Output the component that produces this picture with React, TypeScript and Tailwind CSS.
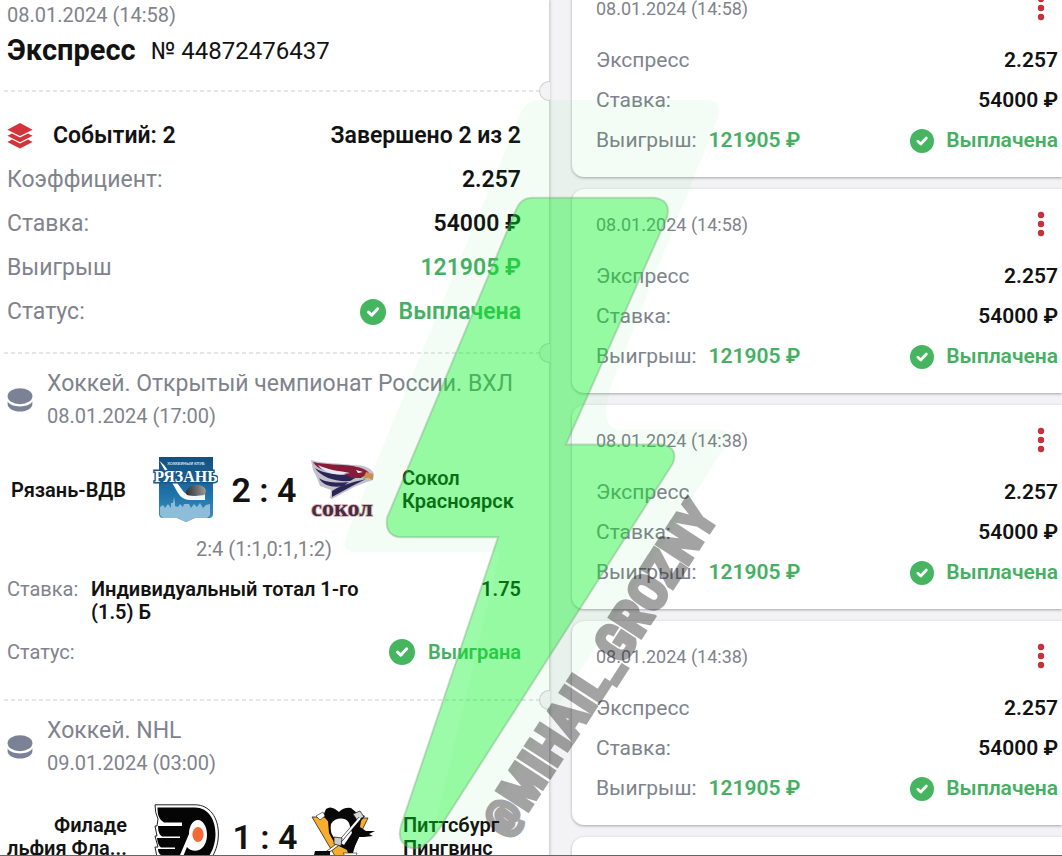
import type { ReactNode } from 'react';

interface Bet {
  id: number;
  date: string;
}

interface GameEvent {
  league: string;
  date: string;
  home: string;
  away: string;
  homeLogo: ReactNode;
  awayLogo: ReactNode;
  score: string;
  periods: string;
  pick: string;
  odds: string;
}

const BETS: Bet[] = [
  { id: 1, date: '08.01.2024 (14:58)' },
  { id: 2, date: '08.01.2024 (14:58)' },
  { id: 3, date: '08.01.2024 (14:38)' },
  { id: 4, date: '08.01.2024 (14:38)' },
];

function CheckBadge({ className }: { className: string }) {
  return (
    <svg viewBox="0 0 26 26" className={className} aria-hidden="true">
      <circle cx="13" cy="13" r="13" fill="#45b55f" />
      <path
        d="M8.500 13.200l3.200 3 6-6.400"
        fill="none"
        stroke="#fff"
        strokeWidth="3"
        strokeLinecap="round"
        strokeLinejoin="round"
      />
    </svg>
  );
}

function LayersIcon() {
  return (
    <svg viewBox="0 0 26 26" className="h-[26px] w-[26px] shrink-0" fill="#d3333a" aria-hidden="true">
      <path d="M13 0L25.6 6.8L13 13L0.4 6.8Z" />
      <path d="M0.4 12.8L5 10.400L13 14.400L21 10.400L25.6 12.8L13 19.2Z" />
      <path d="M0.4 19L5 16.600L13 20.600L21 16.600L25.6 19L13 25.6Z" />
    </svg>
  );
}

function PuckIcon() {
  return (
    <svg viewBox="0 0 26 26" className="h-[26px] w-[26px] shrink-0" fill="#7c8296" aria-hidden="true">
      <ellipse cx="13" cy="9.200" rx="12.4" ry="8" />
      <path d="M0.6 14.600C3 18 7.4 19.400 13 19.400s10-1.400 12.400-4.800v2.600c0 4-5.600 7.400-12.400 7.400S.6 21.200.6 17.200z" />
    </svg>
  );
}

function RyazanLogo() {
  return (
    <svg viewBox="0 0 66 66" className="h-[66px] w-[66px] shrink-0" aria-hidden="true">
      <defs>
        <linearGradient id="ryazan" x1="0" y1="0" x2="0" y2="1">
          <stop offset="0" stopColor="#13507f" />
          <stop offset="0.5" stopColor="#1b6ea6" />
          <stop offset="1" stopColor="#3f92c0" />
        </linearGradient>
        <linearGradient id="ryazanPuck" x1="0" y1="0" x2="1" y2="0">
          <stop offset="0" stopColor="#2d2f33" />
          <stop offset="1" stopColor="#9b9b9b" />
        </linearGradient>
      </defs>
      <path d="M7 0H61V57Q61 61 57 61H43L34 65L25 61H11Q7 61 7 57Z" fill="url(#ryazan)" />
      <path
        d="M8 58V50l3-2 2 3 3-4 3 4V46h2l1-6 1 6v3l3 1 2-3 3 3 1-3h5l2 4 3-4 3 3 3-4 3 5 3-3 4-1v11l-3 3H43l-9 4-9-4H11z"
        fill="#8dbdd8"
      />
      <path d="M7.500 4L26 36q4 7 12 7h15v-6l-14 1q-5 0-8-4L12 8z" fill="#fff" />
      <ellipse cx="44" cy="35" rx="10" ry="7" fill="url(#ryazanPuck)" transform="rotate(-8 44 35)" />
      <path d="M31 39l7 3q8 1 15 0v-4l-10 1q-8 0-12-3z" fill="#f2f6fa" />
      <text x="34" y="8" textAnchor="middle" fontSize="4" fontWeight="700" fill="#cfe2ef" fontFamily="Liberation Sans, sans-serif">
        ХОККЕЙНЫЙ КЛУБ
      </text>
      <text
        x="34"
        y="25"
        textAnchor="middle"
        fontSize="16"
        fontWeight="700"
        fill="#fff"
        stroke="#17588a"
        strokeWidth="3"
        paintOrder="stroke"
        fontFamily="Liberation Serif, serif"
      >
        РЯЗАНЬ
      </text>
    </svg>
  );
}

function SokolLogo() {
  return (
    <svg viewBox="0 0 66 66" className="h-[66px] w-[66px] shrink-0" aria-hidden="true">
      <path
        d="M1 3C14 7 30 6 43 8C54 8 62 11 64 17L63 23L57 25L44 30L22 42L20 41L21 33L10 29L7 21L3 13Z"
        fill="#c3c0cc"
      />
      <path d="M3 5C16 8 30 7 43 9L52 13L45 17L30 16C18 16 7 12 3 5Z" fill="#861c38" />
      <path d="M5 11C14 17 28 18 40 18L47 20L40 24C26 25 12 21 5 11Z" fill="#2b2658" />
      <path d="M9 21C16 26 28 26 39 25L33 29C24 31 13 29 9 21Z" fill="#2b2658" />
      <path d="M28 9C42 8 54 10 59 16L51 21L42 21L32 16Z" fill="#861c38" />
      <path d="M22 34C30 28 44 25 56 22L44 28L22 40Z" fill="#2b2658" />
      <path d="M56 15L63 17V23L58 21L53 22Z" fill="#d48a4a" />
      <path d="M46 13l7 2-5 1z" fill="#fff" />
      <path d="M8 8C18 13 30 14 40 16L30 17.500C20 17 12 14 8 8Z" fill="#eae7ee" />
      <text
        x="32"
        y="59"
        textAnchor="middle"
        fontSize="24"
        fontWeight="700"
        fill="#4a2a3c"
        stroke="#d9b9c2"
        strokeWidth="2"
        paintOrder="stroke"
        fontFamily="Liberation Serif, serif"
      >
        сокол
      </text>
    </svg>
  );
}

function FlyersLogo() {
  return (
    <svg viewBox="0 0 66 66" className="h-[66px] w-[66px] shrink-0" aria-hidden="true">
      <path
        d="M2 .8H42C57 .8 65.400 14 65.400 30S57 62 44 62H2L5 53H4L2 43H5L2 32H4L2 22H4L5 15Q2 9 2 .8Z"
        fill="#fff"
        stroke="#222"
        strokeWidth="1"
      />
      <path
        d="M4.500 3.500H42C55 3.500 62.500 15 62.500 30S54 60 43 60H27L34 43C36 46 42 48 46 46C51 44 54 38 54 30.500S50 16 45 16S36 22 36 30L27 51H8Q5 49 5 45H22V43.500H8Q5 42 4 34H27V32.500H9Q5 30 5 22H29V18.500H11Q4 15 4.500 3.500Z"
        fill="#050505"
      />
      <ellipse cx="45" cy="30.500" rx="5.600" ry="7.600" fill="#f26a38" />
    </svg>
  );
}

function PenguinsLogo() {
  return (
    <svg viewBox="0 0 66 66" className="h-[66px] w-[66px] shrink-0" aria-hidden="true">
      <path d="M1 13H15L30 40L46 14H57L36 57H27Z" fill="#f8ae2c" stroke="#222" strokeWidth="0.800" />
      <path
        d="M12 12L15 5Q19 2 24 5L28 8Q33 3 40 4L46 9L54 12L50 17L49 23L55 27L64 27L58 30L62 32L53 33L48 33L44 42L42 49L44 54L38 53L36 46L24 40L18 29L17 17Z"
        fill="#080808"
      />
      <path d="M20 20C24 13 35 13 38 19L41 29L33 41L25 36Q18 29 20 20Z" fill="#fff" />
      <path d="M5 12L12 8L14 12L9 16Z" fill="#fff" stroke="#222" strokeWidth="0.600" />
      <path d="M42 10L49 7L53 13L46 16Z" fill="#d8d8d8" stroke="#222" strokeWidth="0.800" />
      <path d="M49 14L26 41L14 50" fill="none" stroke="#222" strokeWidth="3.200" />
      <path d="M49 14L26 41L14 50" fill="none" stroke="#fff" strokeWidth="2" />
      <path d="M23 33L31 34L30 42L23 40Z" fill="#ccc" stroke="#222" strokeWidth="0.800" />
      <path d="M4 47H19V51H3Z" fill="#080808" />
      <path d="M32 49H46L45 52H34Z" fill="#fff" stroke="#222" strokeWidth="0.600" />
    </svg>
  );
}

const EVENTS: GameEvent[] = [
  {
    league: 'Хоккей. Открытый чемпионат России. ВХЛ',
    date: '08.01.2024 (17:00)',
    home: 'Рязань-ВДВ',
    away: 'Сокол\nКрасноярск',
    homeLogo: <RyazanLogo />,
    awayLogo: <SokolLogo />,
    score: '2 : 4',
    periods: '2:4 (1:1,0:1,1:2)',
    pick: 'Индивидуальный тотал 1-го\n(1.5) Б',
    odds: '1.75',
  },
  {
    league: 'Хоккей. NHL',
    date: '09.01.2024 (03:00)',
    home: 'Филаде\nльфия Фла...',
    away: 'Питтсбург\nПингвинс',
    homeLogo: <FlyersLogo />,
    awayLogo: <PenguinsLogo />,
    score: '1 : 4',
    periods: '',
    pick: '',
    odds: '',
  },
];

// dashed tear line with the half-round cut on the ticket's right edge
function TearLine() {
  return (
    <div className="relative h-[2px]">
      <div className="mr-2 ml-1 h-[2px] bg-[repeating-linear-gradient(90deg,#e6e6e7_0_4px,transparent_4px_7px)]" />
      <span className="absolute -top-[9px] -right-px h-5 w-[11px] rounded-l-full border border-r-0 border-[#cfcfd2] bg-[#f3f3f5]" />
    </div>
  );
}

function SummaryRow({ label, children }: { label: string; children: ReactNode }) {
  return (
    <div className="flex h-11 items-center justify-between text-[23px]">
      <span className="text-[#80838c]">{label}</span>
      {children}
    </div>
  );
}

function EventBlock({ event }: { event: GameEvent }) {
  return (
    <section className="pt-[14px] pr-7 pb-[31px] pl-[7px]">
      <div className="flex items-center">
        <PuckIcon />
        <div className="pl-[14px] whitespace-nowrap text-[#80838c]">
          <h2 className="text-[23px] leading-8">{event.league}</h2>
          <p className="text-[20px] leading-8">{event.date}</p>
        </div>
      </div>

      <div className="mt-[25px] flex h-[66px] items-center text-[20px] leading-[23px] font-semibold">
        <span className="flex-1 pr-[26px] text-right whitespace-pre">{event.home}</span>
        {event.homeLogo}
        <span className="w-[92px] text-center text-[34px] leading-10">{event.score}</span>
        {event.awayLogo}
        <span className="flex-1 pl-[26px] whitespace-pre">{event.away}</span>
      </div>

      {event.periods ? (
        <>
          <p className="mt-[14px] text-center text-[20px] leading-6 text-[#80838c]">{event.periods}</p>
          <div className="mt-[17px] flex text-[20px] leading-[23px]">
            <span className="w-[84px] text-[#80838c]">Ставка:</span>
            <span className="flex-1 font-semibold whitespace-pre">{event.pick}</span>
            <span className="font-semibold">{event.odds}</span>
          </div>
          <div className="mt-3 flex h-8 items-center text-[20px]">
            <span className="flex-1 text-[#80838c]">Статус:</span>
            <CheckBadge className="mr-[13px] h-[26px] w-[26px]" />
            <span className="font-semibold text-[#45b063]">Выиграна</span>
          </div>
        </>
      ) : null}
    </section>
  );
}

function BetCard({ bet }: { bet: Bet }) {
  return (
    <article className="rounded-l-xl bg-white pt-5 pr-1 pb-4 pl-6 text-[21px] shadow-[0_1px_3px_rgba(0,0,0,0.32)]">
      <div className="flex h-[30px] items-center justify-between">
        <span className="text-[18px] text-[#80838c]">{bet.date}</span>
        <button type="button" aria-label="Меню" className="mr-[13px]">
          <svg viewBox="0 0 8 26" className="h-[26px] w-2" fill="#c4323b">
            <circle cx="4" cy="4" r="3.200" />
            <circle cx="4" cy="13" r="3.200" />
            <circle cx="4" cy="22" r="3.200" />
          </svg>
        </button>
      </div>
      <div className="mt-[18px] flex h-10 items-center justify-between">
        <span className="text-[#80838c]">Экспресс</span>
        <span className="font-semibold">2.257</span>
      </div>
      <div className="flex h-10 items-center justify-between">
        <span className="text-[#80838c]">Ставка:</span>
        <span className="font-semibold">54000 ₽</span>
      </div>
      <div className="flex h-10 items-center">
        <span className="text-[#80838c]">Выигрыш:</span>
        <span className="pl-3 font-semibold text-[#45b063]">121905 ₽</span>
        <CheckBadge className="mr-3 ml-auto h-6 w-6" />
        <span className="font-semibold text-[#45b063]">Выплачена</span>
      </div>
    </article>
  );
}

function Watermark() {
  return (
    <svg
      viewBox="0 0 1062 856"
      className="pointer-events-none absolute inset-0 h-full w-full"
    >
      <path
        d="M540 100H706Q724 100 718 118L612 384Q598 430 620 430H722Q732 432 726 446L640 580L478 830Q462 852 430 848L500 553H356Q340 552 346 536L520 114Q526 100 540 100Z"
        fill="#00c81e"
        opacity="0.045"
      />
      <path
        d="M532 198H654Q672 200 667 218L566 445H662Q679 448 673 464L444 822Q424 856 408 848Q396 842 401 826L498 538H400Q384 536 387 518L516 210Q521 198 532 198Z"
        fill="#00f51e"
        fillOpacity="0.39"
        stroke="#6f9c79"
        strokeOpacity="0.35"
        strokeWidth="2"
      />
      <g opacity="0.4">
        <text
          transform="translate(509 841) rotate(-57)"
          fontFamily="'Liberation Sans Narrow', 'Roboto Condensed', 'DejaVu Sans Condensed', sans-serif"
          fontSize="52"
          fontWeight="700"
          fill="#1c1c1c"
          stroke="#1c1c1c"
          strokeWidth="4"
        >
          <tspan fontSize="42" dy="-5">@</tspan>
          <tspan dy="5">MIHAIL_GROZNY</tspan>
        </text>
      </g>
    </svg>
  );
}

export default function App() {
  return (
    <div className="relative h-screen overflow-hidden border-b border-[#666] bg-[#f3f3f5] font-['Roboto',sans-serif] text-[#121212]">
      <main className="grid grid-cols-[549fr_513fr]">
        <article className="min-w-0 bg-white shadow-[1px_0_3px_rgba(0,0,0,0.2)]">
          <header className="px-[7px] pt-px pb-[18px] whitespace-nowrap">
            <p className="text-[20px] leading-7 text-[#80838c]">08.01.2024 (14:58)</p>
            <div className="flex h-[43px] items-center">
              <h1 className="text-[29px] font-bold">Экспресс</h1>
              <span className="pl-[15px] text-[24px]">№ 44872476437</span>
            </div>
          </header>
          <TearLine />

          <section className="pt-[22px] pr-7 pb-[18px] pl-[7px]">
            <div className="flex h-11 items-center text-[23px] font-semibold">
              <LayersIcon />
              <span className="flex-1 pl-5">Событий: 2</span>
              <span>Завершено 2 из 2</span>
            </div>
            <SummaryRow label="Коэффициент:">
              <span className="font-semibold">2.257</span>
            </SummaryRow>
            <SummaryRow label="Ставка:">
              <span className="font-semibold">54000 ₽</span>
            </SummaryRow>
            <SummaryRow label="Выигрыш">
              <span className="font-semibold text-[#45b063]">121905 ₽</span>
            </SummaryRow>
            <SummaryRow label="Статус:">
              <span className="flex items-center font-semibold text-[#45b063]">
                <CheckBadge className="mr-[13px] h-[26px] w-[26px]" />
                Выплачена
              </span>
            </SummaryRow>
          </section>

          {EVENTS.map((event) => (
            <div key={event.league}>
              <TearLine />
              <EventBlock event={event} />
            </div>
          ))}
        </article>

        {/* Bet history, scrolled past the top of its first card */}
        <aside className="-mt-[27px] flex min-w-0 flex-col gap-3 pl-[23px]">
          {BETS.map((bet) => (
            <BetCard key={bet.id} bet={bet} />
          ))}
          <div className="h-16 rounded-l-xl bg-white shadow-[0_1px_3px_rgba(0,0,0,0.32)]" />
        </aside>
      </main>
      <Watermark />
    </div>
  );
}
